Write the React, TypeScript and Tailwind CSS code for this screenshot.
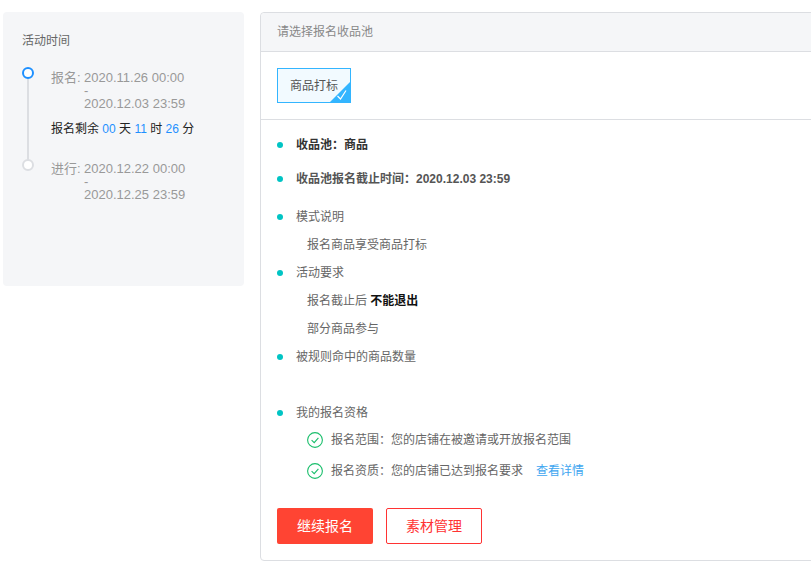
const FONT = 'font-["Liberation_Sans","Noto_Sans_CJK_SC",sans-serif]';

function Bullet({ children, className = '' }: { children: React.ReactNode; className?: string }) {
  return (
    <div className={`flex h-[28px] items-center ${className}`}>
      <span className="mr-[13px] h-[6px] w-[6px] shrink-0 rounded-full bg-[#00c4c4]" />
      {children}
    </div>
  );
}

function CheckRow({ children, className = '' }: { children: React.ReactNode; className?: string }) {
  return (
    <div className={`flex h-[20px] items-center pl-[30px] text-[#666] ${className}`}>
      <svg className="mr-[8px] h-[16px] w-[16px] shrink-0" viewBox="0 0 16 16" fill="none" stroke="#19be6b" strokeWidth="1.1">
        <circle cx="8" cy="8" r="7.4" />
        <path d="M4.6 8.2 7.2 10.6 11.4 5.8" />
      </svg>
      {children}
    </div>
  );
}

function TimeBlock({ label, start, end }: { label: string; start: string; end: string }) {
  return (
    <div className="flex text-[#999]">
      <span className="w-[33px] text-[13px] leading-[26px] whitespace-nowrap">{label}:</span>
      <div className="flex flex-col pt-[3px] pb-[3px] text-[13px]">
        <span className="h-[20px] leading-[20px]">{start}</span>
        <span className="h-[6px] leading-[6px]">-</span>
        <span className="h-[20px] leading-[20px]">{end}</span>
      </div>
    </div>
  );
}

export default function App() {
  return (
    <div className={`${FONT} flex h-[571px] w-[811px] items-start gap-[16px] overflow-hidden bg-white pt-[12px] pl-[3px] text-[12px]`}>
      <aside className="h-[274px] w-[241px] shrink-0 rounded-[4px] bg-[#f5f6f8] pt-[21px] pl-[19px]">
        <p className="text-[12px] leading-[17px] text-[#666]">活动时间</p>
        <div className="relative mt-[15px] pl-[29px]">
          <span className="absolute top-[7px] left-[5px] h-[88px] w-[2px] bg-[#dcdee2]" />
          <span className="absolute top-[2px] left-[0px] h-[12px] w-[12px] rounded-full border-[2px] border-[#1e90ff] bg-white" />
          <span className="absolute top-[94px] left-[0px] h-[12px] w-[12px] rounded-full border-[2px] border-[#dcdee2] bg-white" />
          <TimeBlock label="报名" start="2020.11.26 00:00" end="2020.12.03 23:59" />
          <p className="-mt-[1px] h-[26px] text-[12px] leading-[26px] text-[#222]">
            报名剩余 <span className="text-[#1e90ff]">00</span> 天 <span className="text-[#1e90ff]">11</span> 时{' '}
            <span className="text-[#1e90ff]">26</span> 分
          </p>
          <div className="mt-[14px]">
            <TimeBlock label="进行" start="2020.12.22 00:00" end="2020.12.25 23:59" />
          </div>
        </div>
      </aside>

      <main className="h-[549px] w-[600px] shrink-0 rounded-[4px] border border-[#dcdee2] text-[#666]">
        <header className="flex h-[39px] items-center rounded-t-[4px] border-b border-[#dcdee2] bg-[#f5f6f8] pl-[16px] text-[#888]">
          请选择报名收品池
        </header>
        <div className="h-[68px] border-b border-[#dcdee2] pt-[16px] pl-[16px]">
          <div className="relative flex h-[35px] w-[74px] items-center justify-center border border-[#33b5ff] bg-[#f2faff] text-[#555]">
            商品打标
            <svg className="absolute right-0 bottom-0 h-[20px] w-[20px]" viewBox="0 0 20 20">
              <path d="M20 0V20H0Z" fill="#33b5ff" />
              <path d="M7.5 14 10.5 17 16 8.5" fill="none" stroke="#fff" strokeWidth="1.2" />
            </svg>
          </div>
        </div>

        <div className="pt-[11px] pl-[16px]">
          <Bullet className="font-bold text-[#333]">收品池：商品</Bullet>
          <Bullet className="mt-[6px] font-bold text-[#555]">收品池报名截止时间：2020.12.03 23:59</Bullet>
          <Bullet className="mt-[10px]">模式说明</Bullet>
          <p className="h-[28px] pl-[30px] leading-[28px]">报名商品享受商品打标</p>
          <Bullet>活动要求</Bullet>
          <p className="h-[28px] pl-[30px] leading-[28px]">
            报名截止后 <b className="text-[#111]">不能退出</b>
          </p>
          <p className="h-[28px] pl-[30px] leading-[28px]">部分商品参与</p>
          <Bullet>被规则命中的商品数量</Bullet>
          <Bullet className="mt-[28px]">我的报名资格</Bullet>
          <CheckRow className="mt-[3px]">报名范围：您的店铺在被邀请或开放报名范围</CheckRow>
          <CheckRow className="mt-[11px]">
            报名资质：您的店铺已达到报名要求
            <span className="ml-[13px] text-[#3ea6f0]">查看详情</span>
          </CheckRow>
          <div className="mt-[27px] flex gap-[13px] text-[14px]">
            <button type="button" className="h-[36px] w-[96px] rounded-[2px] bg-[#ff4433] text-white">
              继续报名
            </button>
            <button type="button" className="h-[36px] w-[96px] rounded-[2px] border border-[#ff3333] bg-white text-[#ff3333]">
              素材管理
            </button>
          </div>
        </div>
      </main>
    </div>
  );
}
